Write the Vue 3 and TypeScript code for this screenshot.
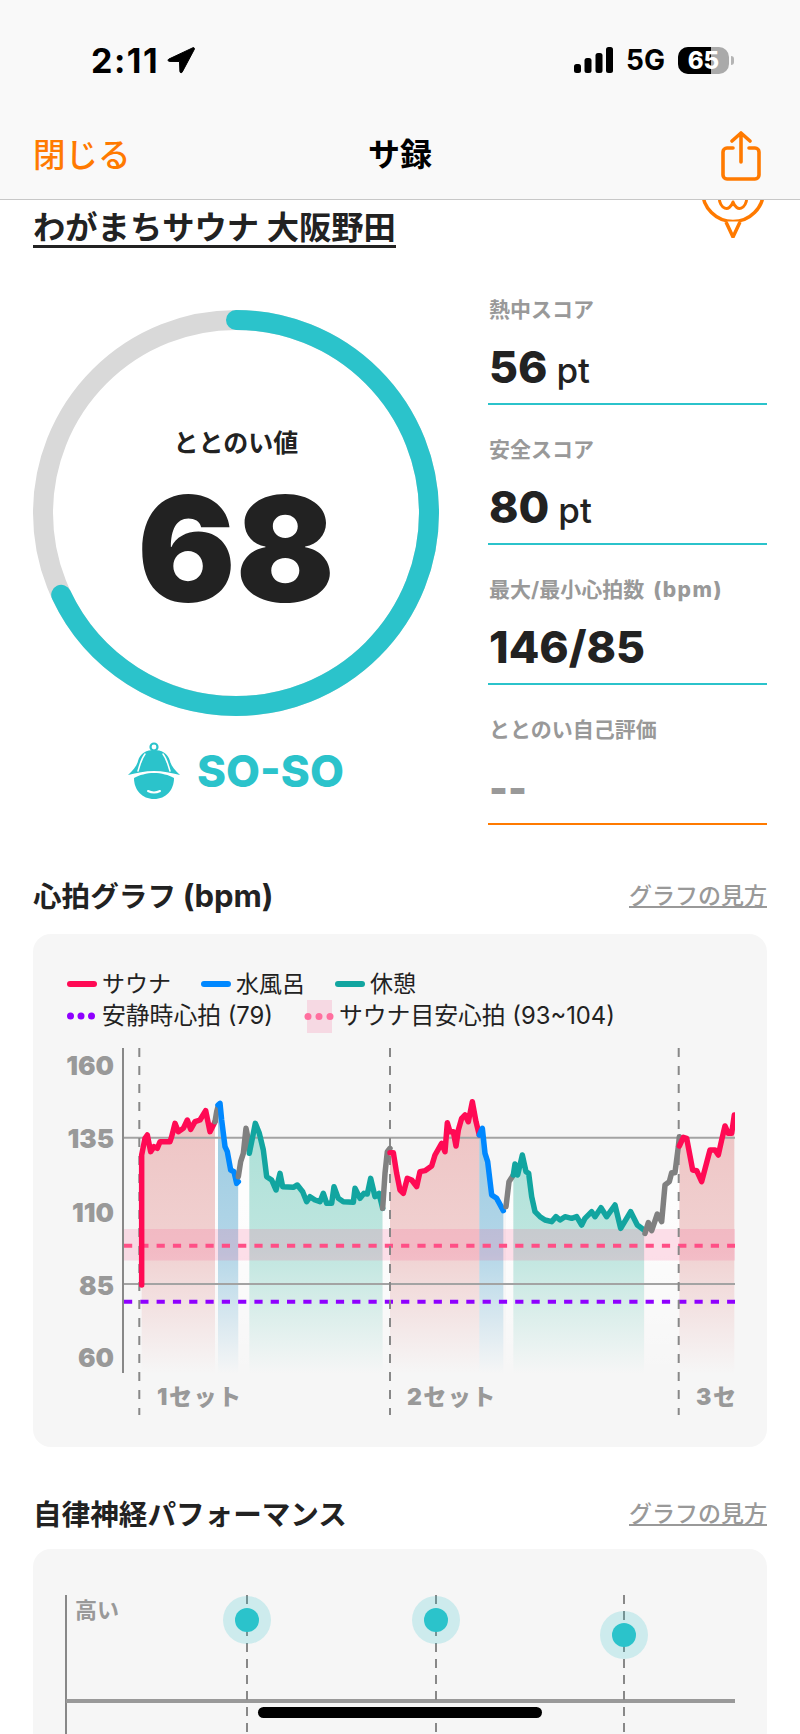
<script setup lang="ts">
type Pt = [number, number];
type Kind = 'sauna' | 'bath' | 'rest' | 'gap';

interface Segment {
  kind: Kind;
  pts: Pt[];
}

// samples measured at 3x, converted by toSvg
const shift = (pts: Pt[]): Pt[] => pts.map(([x, y]) => [x + 1110, y]);

const segments: Segment[] = [
  { kind: 'sauna', pts: [[335, 735], [335, 345], [345, 295], [352, 285], [362, 335], [372, 320], [382, 325], [390, 305], [405, 305], [420, 305], [425, 290], [435, 250], [445, 275], [460, 265], [472, 240], [482, 268], [495, 245], [510, 240], [527, 212], [540, 275], [555, 245]] },
  { kind: 'gap', pts: [[555, 245], [560, 215], [564, 200]] },
  { kind: 'bath', pts: [[564, 195], [570, 190], [575, 240], [585, 320], [592, 335], [602, 390], [612, 395], [620, 430], [625, 425]] },
  { kind: 'gap', pts: [[625, 410], [632, 365], [640, 340], [648, 265], [655, 300], [658, 335]] },
  { kind: 'rest', pts: [[658, 340], [668, 290], [676, 250], [688, 280], [700, 330], [710, 410], [725, 420], [738, 450], [750, 400], [758, 440], [790, 442], [802, 435], [818, 455], [830, 485], [840, 470], [855, 480], [870, 485], [880, 460], [890, 490], [905, 490], [912, 440], [925, 475], [940, 485], [970, 487], [975, 445], [990, 475], [1002, 460], [1012, 462], [1022, 415], [1035, 470], [1047, 460], [1058, 505]] },
  { kind: 'gap', pts: [[1058, 505], [1065, 400], [1072, 335], [1080, 325]] },
  { kind: 'sauna', pts: [[1080, 338], [1090, 338], [1100, 400], [1110, 450], [1120, 460], ...shift([[22, 415], [35, 420], [50, 440], [60, 395], [75, 392], [95, 378], [105, 345], [125, 310], [135, 335], [142, 248], [150, 275], [160, 275], [168, 318], [175, 270], [185, 235], [195, 225], [205, 245], [217, 185], [228, 245], [238, 285]])] },
  { kind: 'bath', pts: shift([[238, 285], [247, 265], [255, 340], [263, 365], [275, 465], [290, 475], [310, 512]]) },
  { kind: 'gap', pts: shift([[318, 500], [327, 425], [340, 405]]) },
  { kind: 'rest', pts: shift([[340, 405], [345, 372], [353, 405], [367, 345], [378, 395], [386, 400], [395, 470], [405, 515], [420, 530], [435, 540], [455, 545], [468, 530], [480, 540], [495, 530], [515, 535], [530, 530], [545, 555], [555, 535], [575, 515], [585, 530], [603, 503], [620, 530], [645, 495], [662, 565], [692, 515], [712, 555], [732, 570]]) },
  { kind: 'gap', pts: shift([[735, 580], [745, 548], [755, 572], [772, 522], [785, 545], [795, 435], [808, 425], [815, 398], [825, 398], [835, 320], [838, 290]]) },
  { kind: 'sauna', pts: shift([[838, 318], [850, 292], [860, 295], [878, 390], [890, 392], [905, 425], [930, 330], [945, 330], [955, 345], [965, 300], [975, 258], [985, 280], [995, 280], [1003, 225]]) },
];

const strokeOf: Record<Kind, string> = {
  sauna: '#ff0a54',
  bath: '#0088ff',
  rest: '#12a5a0',
  gap: '#808080',
};

const toSvg = ([x, y]: Pt): Pt => [x / 3 - 3, y / 3];
const linePoints = (pts: Pt[]) => pts.map(toSvg).map((p) => p.join(',')).join(' ');
const FILL_BOTTOM = 334;
const areaPoints = (pts: Pt[]) => {
  const svg = pts.map(toSvg);
  const first = svg[0][0];
  const last = svg[svg.length - 1][0];
  return [...svg, [last, FILL_BOTTOM], [first, FILL_BOTTOM]].map((p) => p.join(',')).join(' ');
};

const stats = [
  { label: '熱中スコア', value: '56', unit: 'pt' },
  { label: '安全スコア', value: '80', unit: 'pt' },
  { label: '最大/最小心拍数', labelUnit: '(bpm)', value: '146/85', unit: '' },
  { label: 'ととのい自己評価', value: '--', unit: '', empty: true },
];

const legendLines = [
  { label: 'サウナ', color: '#ff0a54' },
  { label: '水風呂', color: '#0088ff' },
  { label: '休憩', color: '#12a5a0' },
];

const yTicks = [
  { label: '160', y: 25 },
  { label: '135', y: 98.5 },
  { label: '110', y: 172 },
  { label: '85', y: 245 },
  { label: '60', y: 317 },
];

const setLines = [106.3, 357, 645.7];
const setLabels = [
  { label: '1セット', x: 124 },
  { label: '2セット', x: 374 },
  { label: '3セット', x: 663 },
];

const nerveDots = [
  { x: 214, y: 71 },
  { x: 403, y: 71 },
  { x: 591, y: 86 },
];

const fills = [
  { id: 'fill-sauna', color: 'rgb(225,111,111)', top: 0.36 },
  { id: 'fill-bath', color: 'rgb(45,150,202)', top: 0.44 },
  { id: 'fill-rest', color: 'rgb(80,197,177)', top: 0.44 },
  { id: 'fill-gap', color: '#fff', top: 0.9 },
];

const R = 193;
const circumference = 2 * Math.PI * R;
const score = 68;
const dash = `${(circumference * score) / 100} ${circumference}`;
</script>

<template>
  <div class="screen">
    <header class="top">
      <div class="status">
        <div class="status-left">
          <span class="time">2:11</span>
          <svg class="loc" width="28" height="28" viewBox="0 0 28 27">
            <path d="M26 1.2 1.800 12.600c-1.200.6-.8 2.300.5 2.300l10.200.1.4 10c.1 1.400 1.900 1.700 2.400.4L27.400 2.700c.3-1-.5-1.900-1.400-1.500z" fill="#000" stroke="#000" stroke-width="1" stroke-linejoin="round" />
          </svg>
        </div>
        <div class="status-right">
          <svg width="39" height="26" viewBox="0 0 39 26">
            <rect x="0" y="17" width="7" height="9" rx="2.500" />
            <rect x="10.500" y="11" width="7" height="15" rx="2.500" />
            <rect x="21.500" y="6" width="7" height="20" rx="2.500" />
            <rect x="32" y="0" width="7" height="26" rx="2.500" />
          </svg>
          <span class="net">5G</span>
          <div class="battery">
            <div class="battery-fill"></div>
            <span class="battery-num">65</span>
            <i class="battery-tip"></i>
          </div>
        </div>
      </div>
      <nav class="nav">
        <span class="close">閉じる</span>
        <span class="nav-title">サ録</span>
        <svg class="share" width="40" height="50" viewBox="0 0 40 50" fill="none" stroke="#ff7a00" stroke-width="3.600" stroke-linecap="round" stroke-linejoin="round">
          <path d="M12 17H6a4 4 0 0 0-4 4v23a4 4 0 0 0 4 4h28a4 4 0 0 0 4-4V21a4 4 0 0 0-4-4h-6" />
          <path d="M20 31V2M11 10l9-8 9 8" />
        </svg>
      </nav>
    </header>

    <main class="content">
      <div class="title-row">
        <h1 class="shop">わがまちサウナ 大阪野田</h1>
        <svg class="pin" width="66" height="79" viewBox="0 0 66 79" fill="none" stroke="#ff7a00" stroke-width="3.500" stroke-linejoin="round">
          <circle cx="33" cy="32" r="30.500" />
          <path d="M33 62.500h-6L33 78l6-15.500z" fill="#fff" stroke="none" />
          <path d="M26 63l7 15 7-15" />
          <path d="M19 38c1 12 10 16 14 5 4 11 13 7 14-5" stroke-width="3" />
        </svg>
      </div>

      <section class="score-row">
        <div class="score-left">
          <div class="gauge">
            <svg width="406" height="406" viewBox="0 0 406 406">
              <circle cx="203" cy="203" :r="R" fill="none" stroke="#d9d9d9" stroke-width="20" />
              <circle
                cx="203"
                cy="203"
                :r="R"
                fill="none"
                stroke="#2bc3cb"
                stroke-width="20"
                stroke-linecap="round"
                :stroke-dasharray="dash"
                transform="rotate(-90 203 203)"
              />
            </svg>
            <div class="gauge-text">
              <div class="gauge-label">ととのい値</div>
              <div class="gauge-num">{{ score }}</div>
            </div>
          </div>
          <div class="rank">
            <svg width="52" height="57" viewBox="0 0 52 57">
              <circle cx="26" cy="5" r="3.500" fill="none" stroke="#2bc3cb" stroke-width="2.200" />
              <path d="M0 33C5 28 9 24 10 19 12 11 19 8 26 8s14 3 16 11c1 5 5 9 10 14-9-2-17-4-26-4S9 31 0 33z" fill="#2bc3cb" />
              <path d="M6 36c5-3 13-5 20-5s15 2 20 5c0 12-8 21-20 21S6 48 6 36z" fill="#2bc3cb" />
              <path d="M20 49c4 2 8 2 12 0" fill="none" stroke="#fff" stroke-width="2" stroke-linecap="round" />
              <path d="M17 12c-4 5-5 11-7 17M35 12c4 5 5 11 7 17" fill="none" stroke="#fff" stroke-width="1.500" stroke-linecap="round" />
            </svg>
            <span class="rank-text">SO-SO</span>
          </div>
        </div>

        <div class="stats">
          <div v-for="s in stats" :key="s.label" class="stat" :class="{ 'stat-empty': s.empty }">
            <div class="stat-label">{{ s.label }}<span v-if="s.labelUnit" class="label-unit">{{ s.labelUnit }}</span></div>
            <div class="stat-value">
              <b>{{ s.value }}</b>
              <span v-if="s.unit">{{ s.unit }}</span>
            </div>
          </div>
        </div>
      </section>

      <div class="section-head first">
        <h2>心拍グラフ <span class="latin">(bpm)</span></h2>
        <a class="how">グラフの見方</a>
      </div>
      <div class="card hr-card">
        <div class="legend">
          <div class="legend-row">
            <div v-for="l in legendLines" :key="l.label" class="legend-item">
              <i class="swatch" :style="{ background: l.color }"></i>
              <span>{{ l.label }}</span>
            </div>
          </div>
          <div class="legend-row second-row">
            <div class="legend-item">
              <svg width="30" height="10" viewBox="0 0 30 10" fill="#8f00ff">
                <circle cx="3.500" cy="5" r="3.500" /><circle cx="14" cy="5" r="3.500" /><circle cx="24.500" cy="5" r="3.500" />
              </svg>
              <span>安静時心拍 (79)</span>
            </div>
            <div class="legend-item">
              <svg width="30" height="33" viewBox="0 0 30 33" fill="#ff6f9f">
                <rect x="3" y="0" width="25" height="33" fill="#f6d9e3" />
                <circle cx="4" cy="16.500" r="3.500" /><circle cx="15" cy="16.500" r="3.500" /><circle cx="26" cy="16.500" r="3.500" />
              </svg>
              <span>サウナ目安心拍 (93~104)</span>
            </div>
          </div>
        </div>

        <svg class="hr-chart" width="734" height="407" viewBox="0 0 734 407">
          <defs>
            <clipPath id="plot"><rect x="0" y="0" width="702" height="407" /></clipPath>
            <linearGradient v-for="f in fills" :id="f.id" :key="f.id" gradientUnits="userSpaceOnUse" x1="0" y1="90" x2="0" :y2="FILL_BOTTOM">
              <stop offset="0" :stop-color="f.color" :stop-opacity="f.top" />
              <stop offset="0.5" :stop-color="f.color" :stop-opacity="f.top * 0.75" />
              <stop offset="1" :stop-color="f.color" stop-opacity="0" />
            </linearGradient>
          </defs>

          <text v-for="t in yTicks" :key="t.label" class="tick" x="81" :y="t.y" text-anchor="end" dominant-baseline="central">{{ t.label }}</text>

          <g clip-path="url(#plot)">
            <polygon v-for="(seg, i) in segments" :key="'a' + i" :points="areaPoints(seg.pts)" :fill="`url(#fill-${seg.kind})`" />
            <rect x="91" y="189" width="611" height="31.500" fill="#ff4f86" opacity=".17" />
            <line x1="91" y1="97.700" x2="702" y2="97.700" stroke="#a3a3a3" stroke-width="2" />
            <line x1="91" y1="244" x2="702" y2="244" stroke="#a3a3a3" stroke-width="2" />
            <line x1="91" y1="205.700" x2="702" y2="205.700" stroke="#ff4f86" stroke-width="4" stroke-dasharray="8.200 8.100" />
            <line x1="91" y1="261.700" x2="702" y2="261.700" stroke="#8f00ff" stroke-width="4" stroke-dasharray="8.200 8.100" />
            <line v-for="x in setLines" :key="x" :x1="x" y1="8" :x2="x" y2="375" stroke="#888" stroke-width="2" stroke-dasharray="9 9" />
            <polyline
              v-for="(seg, i) in segments"
              :key="'l' + i"
              :points="linePoints(seg.pts)"
              fill="none"
              :stroke="strokeOf[seg.kind]"
              stroke-width="5.500"
              stroke-linejoin="round"
              stroke-linecap="round"
            />
            <text v-for="s in setLabels" :key="s.label" class="set-label" :x="s.x" y="357" dominant-baseline="central">{{ s.label }}</text>
          </g>
          <line x1="90" y1="8" x2="90" y2="333" stroke="#888" stroke-width="2" />
        </svg>
      </div>

      <div class="section-head second">
        <h2>自律神経パフォーマンス</h2>
        <a class="how">グラフの見方</a>
      </div>
      <div class="card nerve-card">
        <svg width="734" height="200" viewBox="0 0 734 200">
          <line x1="33" y1="46" x2="33" y2="200" stroke="#888" stroke-width="2" />
          <line x1="33" y1="152" x2="702" y2="152" stroke="#999" stroke-width="4" />
          <text class="tick-small" x="42" y="61" dominant-baseline="central">高い</text>
          <g v-for="d in nerveDots" :key="d.x">
            <line :x1="d.x" y1="46" :x2="d.x" y2="200" stroke="#888" stroke-width="2" stroke-dasharray="9 7" />
            <circle :cx="d.x" :cy="d.y" r="24" fill="#2bc3cb" opacity=".2" />
            <circle :cx="d.x" :cy="d.y" r="12" fill="#2bc3cb" />
          </g>
        </svg>
      </div>
    </main>

    <div class="home-bar"></div>
  </div>
</template>

<style scoped>
.screen {
  position: relative;
  width: 800px;
  height: 1734px;
  overflow: hidden;
  background: #fff;
  color: #222;
  font-family: Inter, "Noto Sans CJK JP", sans-serif;
}

.top {
  position: relative;
  z-index: 2;
  height: 199px;
  background: #f9f9f9;
  border-bottom: 1px solid #c8c8c8;
}

.status {
  display: flex;
  justify-content: space-between;
  align-items: center;
  height: 120px;
  padding: 0 71px 0 91px;
}

.status-left,
.status-right {
  display: flex;
  align-items: center;
}

.time {
  font-size: 34px;
  font-weight: 700;
  color: #000;
  letter-spacing: 1.5px;
}

.loc {
  margin-left: 8px;
}

.status-right {
  color: #000;
}

.net {
  margin: 0 13px;
  font-size: 28px;
  font-weight: 700;
}

.battery {
  position: relative;
  width: 51px;
  height: 27px;
  border-radius: 10px;
  background: #aaa;
}

.battery-fill {
  width: 33px;
  height: 100%;
  border-radius: 10px 0 0 10px;
  background: #000;
}

.battery-num {
  position: absolute;
  inset: 0;
  text-align: center;
  line-height: 27px;
  font-size: 24px;
  font-weight: 800;
  color: #fff;
}

.battery-tip {
  position: absolute;
  left: 53px;
  top: 9px;
  width: 3px;
  height: 9px;
  border-radius: 0 3px 3px 0;
  background: #b5b5b5;
}

.nav {
  display: flex;
  justify-content: space-between;
  align-items: center;
  position: relative;
  height: 64px;
  padding: 0 39px 0 33px;
}

.close {
  font-size: 32.500px;
  font-weight: 500;
  color: #ff7a00;
}

.nav-title {
  position: absolute;
  left: 0;
  right: 0;
  text-align: center;
  font-size: 32px;
  font-weight: 700;
  color: #000;
}

.share {
  margin-top: 8px;
}

.content {
  padding: 0 33px;
}

.title-row {
  display: flex;
  justify-content: space-between;
  align-items: flex-start;
  height: 48px;
}

.shop {
  margin: 11px 0 0;
  font-size: 32.300px;
  line-height: 34px;
  font-weight: 700;
  border-bottom: 3px solid #222;
}

.pin {
  margin: -41px 1px 0 0;
}

.score-row {
  display: flex;
  justify-content: space-between;
  padding-top: 48px;
}

.score-left {
  display: flex;
  flex-direction: column;
  align-items: center;
  width: 406px;
  padding-top: 14px;
}

.gauge {
  position: relative;
  width: 406px;
  height: 406px;
}

.gauge-text {
  position: absolute;
  inset: 0;
  text-align: center;
}

.gauge-label {
  margin-top: 115px;
  font-size: 25px;
  line-height: 36px;
  font-weight: 700;
}

.gauge-num {
  margin-top: 2px;
  font-size: 146px;
  line-height: 172px;
  font-weight: 900;
}

.rank {
  display: flex;
  align-items: center;
  gap: 17px;
  margin-top: 26px;
}

.rank-text {
  font-size: 44px;
  font-weight: 800;
  color: #2bc3cb;
}

.stats {
  display: flex;
  flex-direction: column;
  gap: 31px;
  width: 279px;
}

.stat {
  border-bottom: 2px solid #2bc3cb;
  padding: 0 0 11px 1px;
}

.stat-empty {
  border-bottom-color: #ff7a00;
}

.stat-label {
  margin-bottom: 18px;
  font-size: 21px;
  line-height: 28px;
  font-weight: 700;
  color: #999;
  white-space: nowrap;
}

.label-unit {
  margin-left: 9px;
  font-size: 21px;
  font-weight: 800;
  letter-spacing: 1.5px;
}

.stat-value {
  height: 50px;
  line-height: 50px;
  white-space: nowrap;
}

.stat-value b {
  font-size: 44.500px;
  font-weight: 800;
}

.stat-value span {
  margin-left: 9px;
  font-size: 35px;
  font-weight: 500;
}

.stat-empty b {
  position: relative;
  top: 2px;
  color: #999;
  font-size: 40px;
  font-weight: 900;
}

.section-head {
  display: flex;
  justify-content: space-between;
  align-items: center;
  height: 40px;
}

.section-head.first {
  margin-top: 49px;
}

.section-head.second {
  margin-top: 45px;
}

.section-head h2 {
  margin: 0;
  font-size: 28.600px;
  font-weight: 700;
}

.latin {
  font-size: 31px;
}

.how {
  font-size: 23px;
  font-weight: 500;
  color: #999;
  text-decoration: underline;
}

.card {
  border-radius: 18px;
  background: #f6f6f6;
  overflow: hidden;
}

.hr-card {
  height: 513px;
  margin-top: 20px;
}

.nerve-card {
  height: 200px;
  margin-top: 17px;
}

.legend {
  padding: 34px 0 0 34px;
  height: 106px;
  box-sizing: border-box;
}

.legend-row {
  display: flex;
  gap: 30px;
  height: 32px;
}

.legend-item {
  display: flex;
  align-items: center;
  gap: 5px;
  font-size: 23px;
  line-height: 32px;
  color: #222;
  white-space: nowrap;
}

.second-row {
  gap: 31px;
}

.second-row .legend-item {
  font-size: 23.800px;
}

.legend-item svg {
  flex: none;
}

.swatch {
  display: block;
  width: 30px;
  height: 6px;
  border-radius: 3px;
}

.hr-chart,
.nerve-card svg {
  display: block;
}

.tick {
  font-size: 26px;
  font-weight: 900;
  fill: #999;
}

.set-label {
  font-size: 23px;
  font-weight: 900;
  letter-spacing: 1.500px;
  fill: #999;
}

.tick-small {
  font-size: 22px;
  font-weight: 700;
  fill: #999;
}

.home-bar {
  position: absolute;
  left: 258px;
  top: 1707px;
  width: 284px;
  height: 11px;
  border-radius: 6px;
  background: #000;
}
</style>

<style>
html,
body {
  background: #fff;
}
</style>
